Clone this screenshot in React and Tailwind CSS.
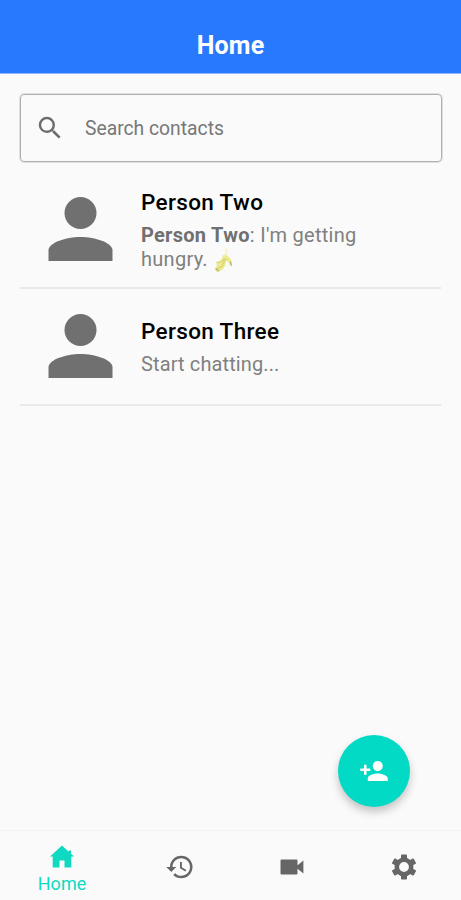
import { MdHistory, MdPersonAdd, MdSearch } from 'react-icons/md';

const PersonIcon = ({ className }) => (
    <svg className={className} viewBox="0 0 24 24" fill="currentColor">
        <circle cx="12" cy="8" r="4" />
        <path d="M4 20v-2.8C4.2 15.4 8.3 14 12 14s7.8 1.4 8 3.2V20z" />
    </svg>
);

const HomeIcon = ({ className }) => (
    <svg className={className} viewBox="0 0 30 30" fill="currentColor">
        <path d="M15 3.5 3 14.6h2.7v10.9h6.8v-7h5v7h6.8V14.6H27l-3-2.8V8.600h-2.200v1.200z" />
    </svg>
);

const VideoIcon = ({ className }) => (
    <svg className={className} viewBox="0 0 30 30" fill="currentColor">
        <path d="M4.5 7.5h15a1 1 0 0 1 1 1v4.8L26.400 8.500v13L20.500 16.700v4.800a1 1 0 0 1-1 1h-15a1 1 0 0 1-1-1v-13a1 1 0 0 1 1-1z" />
    </svg>
);

const SettingsIcon = ({ className }) => (
    <svg className={className} viewBox="0 0 30 30" fill="currentColor">
        <circle cx="15" cy="15" r="7.2" fill="none" stroke="currentColor" strokeWidth="4.6" />
        {[0, 60, 120, 180, 240, 300].map(angle => (
            <rect key={angle} x="12" y="2.5" width="6" height="5" rx="0.8" transform={`rotate(${angle} 15 15)`} />
        ))}
    </svg>
);

const Banana = () => (
    <svg className="inline-block w-[20px] h-[25px] ml-[6px] -my-1" viewBox="0 0 18 24" fill="none">
        <path d="M10 0h2l1 9-3 2-2-3c2-2 2-4 2-8z" fill="#f7f5d0" />
        <path d="M8 7c4-1 9 3 9 8l-1 3c-2-3-3-5-5-6 0 6-4 11-9 11l-2-3c2-2 3-3 1-7 3 1 6-1 7-6z" fill="#ece98e" />
        <path d="M9 10c1 5-2 9-7 10M12 11c-3 0-6 3-10 3" stroke="#d6d16e" strokeWidth="1" />
        <path d="M15 13l1 4M1 20l3 2" stroke="#b5b178" strokeWidth="1.2" />
    </svg>
);

const contacts = [
    { id: 2, name: 'Person Two', sender: 'Person Two', message: "I'm getting hungry." },
    { id: 3, name: 'Person Three', message: 'Start chatting...' },
];

const tabs = [
    { id: 'home', label: 'Home', icon: HomeIcon },
    { id: 'history', label: 'History', icon: MdHistory },
    { id: 'video', label: 'Video', icon: VideoIcon },
    { id: 'settings', label: 'Settings', icon: SettingsIcon },
];

const ContactRow = ({ contact }) => (
    <li className="flex items-center h-[117px] pl-3 pb-[2px] border-b-2 border-[#e9e9e9]">
        <PersonIcon className="w-[97px] h-24 shrink-0 text-[#707070]" />
        <div className="ml-3 w-[240px]">
            <div className="text-[22.5px] leading-[30px] tracking-[0.35px] font-medium text-black">{contact.name}</div>
            <div className={`mt-[6px] text-[20px] leading-[24px] text-[#808080] ${contact.sender ? 'tracking-[0.28px]' : 'tracking-[0.12px]'}`}>
                {contact.sender && <><b className="font-bold text-[#707070]">{contact.sender}</b>: </>}
                {contact.message}
                {contact.sender && <Banana />}
            </div>
        </div>
    </li>
);

const App = () => {
    return (
        <div className="relative flex flex-col h-[900px] w-full bg-[#fafafa] font-['Roboto',sans-serif]">
            {/* Header */}
            <header className="flex items-end justify-center h-[74px] pb-[12px] bg-[#2979ff] border-b border-[#8cb6ff]">
                <h1 className="text-[25px] leading-[30px] tracking-[0.2px] font-bold text-white">Home</h1>
            </header>

            <main className="flex-1 px-5 pt-[20px]">
                {/* Search */}
                <div className="flex items-center h-[68px] px-[14px] mr-[-1px] border outline outline-[#dedede] border-[#b0b0b0] rounded-[4px]">
                    <MdSearch className="w-[30px] h-[30px] text-[#6c6c6c]" />
                    <span className="ml-5 pt-[3px] text-[19.3px] text-[#777]">Search contacts</span>
                </div>

                {/* Contacts */}
                <ul className="mt-[10px]">
                    {contacts.map(contact => <ContactRow key={contact.id} contact={contact} />)}
                </ul>
            </main>

            <button
                aria-label="Add contact"
                className="absolute right-[51px] bottom-[93px] flex items-center justify-center w-[72px] h-[72px] rounded-full bg-[#03dac5] shadow-[0_5px_9px_rgba(0,0,0,0.22)]"
            >
                <MdPersonAdd className="w-[30px] h-[30px] text-white" />
            </button>

            {/* Bottom tabs */}
            <nav className="grid grid-cols-[124px_112px_112px_112px] h-[70px] border-t border-[#f3f3f3]">
                {tabs.map(({ id, label, icon: Icon }) => (
                    <button
                        key={id}
                        aria-label={label}
                        className={`flex flex-col items-center justify-center ${id === 'home' ? 'pt-[6px] text-[#0fd9c1]' : 'pt-[3px] text-[#666]'}`}
                    >
                        <Icon className="w-[30px] h-[30px]" />
                        {id === 'home' && <span className="text-[18px] leading-[24px]">{label}</span>}
                    </button>
                ))}
            </nav>
        </div>
    );
};

export default App;
